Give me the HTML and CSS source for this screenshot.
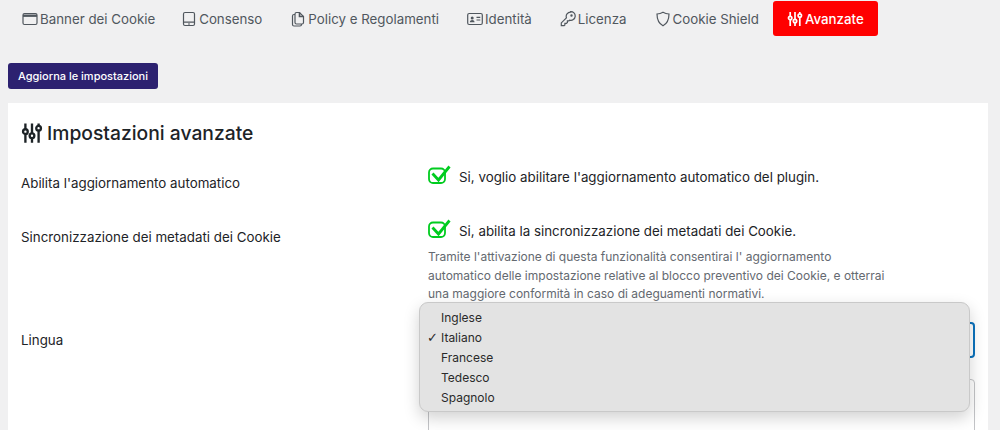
FILE: index.html
```html
<!DOCTYPE html>
<html lang="it">
<head>
  <meta charset="UTF-8" />
  <title>Impostazioni avanzate</title>
  <link rel="stylesheet" href="styles.css">
</head>
<body>

<nav class="tabs">
  <a class="tab tab-first" href="#">
    <svg class="icon" viewBox="0 0 16 16"><rect x="1" y="2.500" width="14" height="11" rx="1.500"/><path d="M1 4.700h14" stroke-width="2.400"/></svg>
    Banner dei Cookie
  </a>
  <a class="tab" href="#">
    <svg class="icon" viewBox="0 0 16 16"><rect x="2.500" y="1.500" width="11" height="13" rx="1.500"/><path d="M2.500 11.200h11M7 13h2"/></svg>
    Consenso
  </a>
  <a class="tab" href="#">
    <svg class="icon" viewBox="0 0 16 16"><path d="M6.500 1.500h3l4 4v6a1.500 1.500 0 0 1-1.500 1.500H6.500A1.500 1.500 0 0 1 5 11.500V3a1.500 1.500 0 0 1 1.500-1.500z"/><path d="M9.500 1.500v4h4" stroke-width="1.600"/><path d="M5 3.500H4A1.500 1.500 0 0 0 2.500 5v8.500A1.500 1.500 0 0 0 4 15h6a1.500 1.500 0 0 0 1.500-1.500V13"/></svg>
    Policy e Regolamenti
  </a>
  <a class="tab" href="#">
    <svg class="icon" viewBox="0 0 16 16"><rect x="0.700" y="2.500" width="14.600" height="11" rx="1.500"/><circle cx="5.200" cy="7" r="1.500" class="solid"/><path d="M2.800 11.200c.2-3 4.600-3 4.800 0z" class="solid"/><path d="M9.500 6.300h3.800M9.500 9h3.800"/></svg>
    Identità
  </a>
  <a class="tab" href="#">
    <svg class="icon" viewBox="0 0 16 16"><path d="M10.500 1.200a4.300 4.300 0 0 0-4.100 5.600L1.300 11.900v2.800h2.800l.8-.8v-1.500h1.500l1-1v-1.500h1.500l.8-.8a4.300 4.300 0 1 0 .8-8.400z"/><circle cx="11.500" cy="4.500" r=".6"/></svg>
    Licenza
  </a>
  <a class="tab" href="#">
    <svg class="icon" viewBox="0 0 16 16"><path d="M8 1.200c2 1.100 4 1.600 6 1.800 0 5.500-1.800 9.500-6 11.800C3.800 12.500 2 8.500 2 3c2-.2 4-.7 6-1.800z"/></svg>
    Cookie Shield
  </a>
  <a class="tab active" href="#">
    <svg class="icon sliders" viewBox="0 0 16 16"><path d="M3.200 1v4M3.200 9v6M8 1v7M8 12v3M12.800 1v1.500M12.800 6.500V15"/><circle cx="3.200" cy="7" r="1.700"/><circle cx="8" cy="10" r="1.700"/><circle cx="12.800" cy="4.500" r="1.700"/></svg>
    Avanzate
  </a>
</nav>

<div class="toolbar">
  <button class="save-btn">Aggiorna le impostazioni</button>
</div>

<div class="card">
  <h2>
    <svg class="icon sliders title-icon" viewBox="0 0 16 16"><path d="M3.200 1v4M3.200 9v6M8 1v7M8 12v3M12.800 1v1.500M12.800 6.500V15"/><circle cx="3.200" cy="7" r="1.700"/><circle cx="8" cy="10" r="1.700"/><circle cx="12.800" cy="4.500" r="1.700"/></svg>
    Impostazioni avanzate
  </h2>

  <div class="row row-update">
    <label class="row-label">Abilita l'aggiornamento automatico</label>
    <div class="check-line">
      <svg class="check" viewBox="0 0 23 20"><rect x="1" y="3.500" width="16" height="14.500" rx="4"/><path d="M4.500 8.500l6 6.500L21.500 1.500" stroke-width="2.800"/></svg>
      Si, voglio abilitare l'aggiornamento automatico del plugin.
    </div>
  </div>

  <div class="row row-sync">
    <label class="row-label">Sincronizzazione dei metadati dei Cookie</label>
    <div>
      <div class="check-line">
        <svg class="check" viewBox="0 0 23 20"><rect x="1" y="3.500" width="16" height="14.500" rx="4"/><path d="M4.500 8.500l6 6.500L21.500 1.500" stroke-width="2.800"/></svg>
        Si, abilita la sincronizzazione dei metadati dei Cookie.
      </div>
      <p class="help">Tramite l'attivazione di questa funzionalità consentirai l' aggiornamento automatico delle impostazione relative al blocco preventivo dei Cookie, e otterrai una maggiore conformità in caso di adeguamenti normativi.</p>
    </div>
  </div>

  <div class="row row-lang">
    <label class="row-label">Lingua</label>
    <div class="select-wrap">
      <div class="select-box"></div>
      <ul class="menu">
        <li>Inglese</li>
        <li class="selected">Italiano</li>
        <li>Francese</li>
        <li>Tedesco</li>
        <li>Spagnolo</li>
      </ul>
    </div>
  </div>

  <div class="row">
    <div></div>
    <div class="textarea-box"></div>
  </div>
</div>

</body>
</html>
```

FILE: styles.css
```css
html, body {
  height: 430px;
  overflow: hidden;
}

body {
  margin: 0;
  background-color: #f0f0f1;
  font-family: Inter, 'Noto Sans', sans-serif;
  color: #1d2327;
  font-size: 13px;
}

.icon {
  width: 16px;
  height: 16px;
  fill: none;
  stroke: currentColor;
  stroke-width: 1.200;
  flex-shrink: 0;
}

.icon .solid {
  fill: currentColor;
  stroke: none;
}

.icon.sliders {
  stroke-width: 1.700;
}

.tabs {
  display: flex;
  padding: 1px 0 0 8px;
}

.tab {
  display: flex;
  align-items: center;
  gap: 2px;
  height: 35px;
  padding: 0 14px;
  font-size: 13.300px;
  color: #50575e;
  text-decoration: none;
  border-radius: 3px;
}

.tab-first {
  padding-right: 12px;
}

.tab.active {
  background-color: #ff0000;
  color: #fff;
  font-weight: 500;
}

.toolbar {
  padding: 27px 8px 0;
}

.save-btn {
  display: block;
  height: 26px;
  width: 150px;
  padding: 0;
  border: none;
  border-radius: 3px;
  background-color: #2c2170;
  color: #fff;
  font-family: inherit;
  font-size: 11px;
  font-weight: 500;
}

.card {
  margin: 14px 12px 0 8px;
  padding: 17px 13px 0;
  background: #fff;
}

h2 {
  display: flex;
  align-items: center;
  gap: 4px;
  margin: 0;
  height: 26px;
  font-size: 19.300px;
  font-weight: 500;
  color: #1d2327;
}

.title-icon {
  width: 22px;
  height: 22px;
}

.row {
  display: grid;
  grid-template-columns: 407px 547px;
}

.row-update {
  margin-top: 21px;
  height: 46px;
}

.row-update .row-label {
  padding-top: 8px;
}

.row-sync {
  margin-top: 8px;
  height: 101px;
}

.row-sync .row-label {
  padding-top: 8px;
}

.row-lang {
  height: 57px;
}

.row-label {
  font-size: 13.350px;
  line-height: 17px;
}

.row-lang .row-label {
  padding-top: 10px;
}

.check-line {
  display: flex;
  align-items: center;
  gap: 8px;
  height: 20px;
  font-size: 13.350px;
}

.check {
  width: 23px;
  height: 20px;
  margin-top: -4px;
  fill: none;
  stroke: #00cc1f;
  stroke-width: 1.800;
  flex-shrink: 0;
}

.help {
  margin: 7px 0 0;
  max-width: 462px;
  font-size: 12px;
  line-height: 18.500px;
  color: #646970;
}

.select-wrap {
  position: relative;
}

.select-box {
  height: 32px;
  border: 2px solid #0b72bd;
  border-radius: 4px;
  background: #fff;
}

.menu {
  position: absolute;
  top: -20px;
  left: -9px;
  width: 551px;
  height: 110px;
  box-sizing: border-box;
  margin: 0;
  padding: 5px 0 0 21px;
  list-style: none;
  background: #e3e3e3;
  border: 1px solid #c9c9c9;
  border-radius: 9px;
  box-shadow: 0 6px 16px rgba(0, 0, 0, 0.18);
  font-size: 12px;
  color: #2a2a2a;
}

.menu li {
  position: relative;
  height: 20px;
  line-height: 20px;
}

.menu .selected::before {
  content: "✓";
  position: absolute;
  left: -14px;
  font-family: 'DejaVu Sans', sans-serif;
  font-size: 13px;
}

.textarea-box {
  height: 120px;
  width: 545px;
  border: 1px solid #c3c4c7;
  border-radius: 4px;
}
```
